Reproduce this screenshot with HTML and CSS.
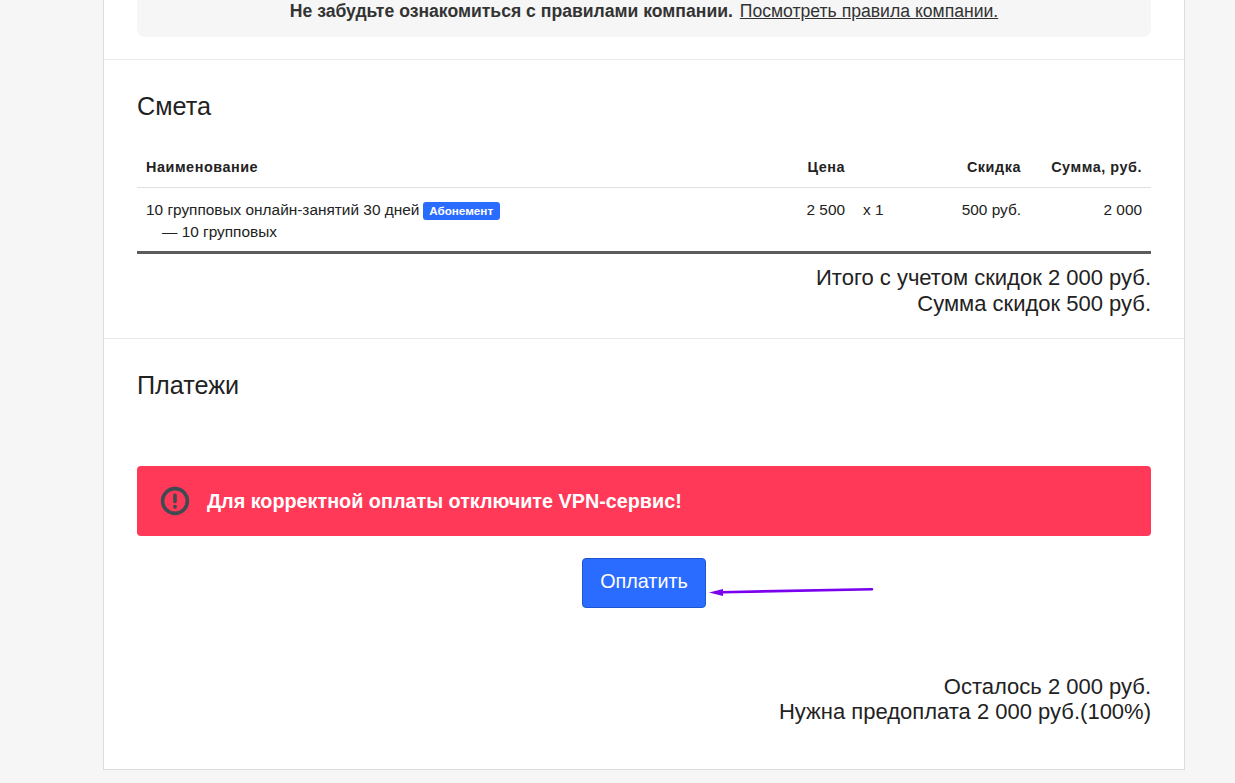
FILE: index.html
```html
<!DOCTYPE html>
<html lang="ru">
  <head>
    <meta charset="UTF-8" />
    <meta name="viewport" content="width=device-width, initial-scale=1.0" />
    <title>Счет</title>
    <link rel="stylesheet" href="styles.css">
  </head>
  <body>
    <div class="card">
      <section class="section section-top">
        <div class="notice">
          <b>Не забудьте ознакомиться с правилами компании.</b>
          <a href="#">Посмотреть правила компании.</a>
        </div>
      </section>

      <section class="section section-estimate">
        <h2>Смета</h2>
        <table class="estimate">
          <colgroup>
            <col class="col-name">
            <col class="col-price">
            <col class="col-qty">
            <col class="col-discount">
            <col class="col-sum">
          </colgroup>
          <tr>
            <th>Наименование</th>
            <th class="right">Цена</th>
            <th></th>
            <th class="right">Скидка</th>
            <th class="right">Сумма, руб.</th>
          </tr>
          <tr>
            <td>
              <div>10 групповых онлайн-занятий 30 дней <span class="badge">Абонемент</span></div>
              <div class="sub-item">— 10 групповых</div>
            </td>
            <td class="right">2 500</td>
            <td>x 1</td>
            <td class="right">500 руб.</td>
            <td class="right">2 000</td>
          </tr>
        </table>
        <div class="totals">
          <div>Итого с учетом скидок 2 000 руб.</div>
          <div>Сумма скидок 500 руб.</div>
        </div>
      </section>

      <section class="section section-payments">
        <h2>Платежи</h2>
        <div class="alert">
          <svg class="alert-icon" width="30" height="30" viewBox="0 0 30 30">
            <circle cx="15" cy="15" r="12.4" fill="none" stroke="#3f4a52" stroke-width="3.6"/>
            <rect x="13.2" y="7.6" width="3.6" height="9.6" rx="1.6" fill="#3f4a52"/>
            <circle cx="15" cy="20.7" r="2" fill="#3f4a52"/>
          </svg>
          <span>Для корректной оплаты отключите VPN-сервис!</span>
        </div>
        <div class="pay-row">
          <button class="pay-btn">Оплатить</button>
          <svg class="arrow" width="168" height="12" viewBox="0 0 168 12">
            <path d="M164 2.2 L14 5.2" fill="none" stroke="#7a00ee" stroke-width="2.6" stroke-linecap="round"/>
            <path d="M1 5.6 L15 2 L15 9 Z" fill="#7a00ee"/>
          </svg>
        </div>
        <div class="totals totals-pay">
          <div>Осталось 2 000 руб.</div>
          <div>Нужна предоплата 2 000 руб.(100%)</div>
        </div>
      </section>
    </div>
  </body>
</html>
```

FILE: styles.css
```css
html,
body {
  height: 100%;
}
body {
  margin: 0;
  background-color: #f6f6f6;
  font-family: "Liberation Sans", Arial, sans-serif;
  color: #222;
  overflow: hidden;
}
.card {
  box-sizing: border-box;
  width: 1082px;
  height: 770px;
  margin-left: 103px;
  background-color: #fff;
  border: 1px solid #dcdcdc;
  border-top: 0;
}
.section {
  padding: 0 33px;
  border-bottom: 1px solid #ebebeb;
}
.section-top {
  height: 59px;
}
.section-estimate {
  box-sizing: border-box;
  height: 279px;
  padding-top: 32px;
}
.section-payments {
  border-bottom: 0;
  padding-top: 32px;
}
h2 {
  margin: 0;
  font-size: 25.2px;
  line-height: 28px;
  font-weight: 400;
}
.notice {
  box-sizing: border-box;
  height: 37px;
  padding-top: 1px;
  background-color: #f6f6f6;
  border-radius: 0 0 8px 8px;
  font-size: 17.6px;
  line-height: 20px;
  text-align: center;
  color: #333;
}
.notice a {
  margin-left: 2px;
  color: #333;
}
.estimate {
  width: 1014px;
  margin-top: 28px;
  border-collapse: collapse;
  table-layout: fixed;
  border-bottom: 3px solid #5c5c5c;
  font-size: 15.4px;
}
.col-name {
  width: 653px;
}
.col-price {
  width: 64px;
}
.col-qty {
  width: 66px;
}
.col-discount {
  width: 110px;
}
.col-sum {
  width: 121px;
}
th {
  box-sizing: border-box;
  height: 39px;
  padding: 0 9px 1px;
  font-size: 14.4px;
  text-align: left;
  letter-spacing: 0.55px;
  border-bottom: 1px solid #e0e0e0;
}
td {
  height: 65px;
  padding: 11px 9px 0;
  box-sizing: border-box;
  line-height: 22px;
  vertical-align: top;
}
.right {
  text-align: right;
}
.sub-item {
  padding-left: 16px;
}
.badge {
  display: inline-block;
  width: 77px;
  margin-left: -1px;
  background-color: #2a6cff;
  border-radius: 3px;
  color: #fff;
  font-size: 11.7px;
  font-weight: 700;
  line-height: 18px;
  text-align: center;
}
.totals {
  margin-top: 11px;
  font-size: 22px;
  line-height: 26px;
  text-align: right;
}
.alert {
  display: flex;
  align-items: center;
  gap: 17px;
  height: 70px;
  margin-top: 67px;
  padding-left: 23px;
  background-color: #ff3957;
  border-radius: 4px;
  color: #fff;
  font-size: 19.8px;
  font-weight: 700;
}
.pay-row {
  position: relative;
  display: flex;
  justify-content: center;
  margin-top: 22px;
}
.pay-btn {
  box-sizing: border-box;
  width: 124px;
  height: 50px;
  padding: 0 0 4px;
  background-color: #2a6cff;
  border: 1px solid #1c55cf;
  border-radius: 4px;
  color: #fff;
  font-family: inherit;
  font-size: 19.8px;
}
.arrow {
  position: absolute;
  left: 571px;
  top: 29px;
}
.totals-pay {
  margin-top: 66px;
  line-height: 25px;
}
```
